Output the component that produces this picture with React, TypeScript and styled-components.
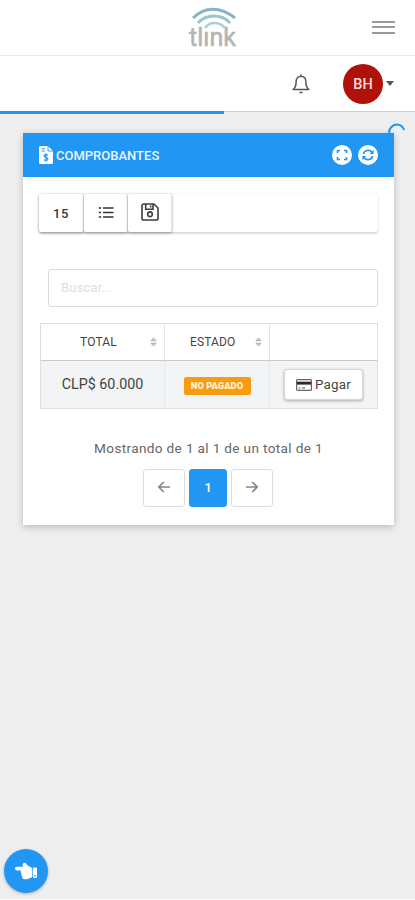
import React from 'react';
import styled, { createGlobalStyle } from 'styled-components';
import { FaHandPointLeft } from 'react-icons/fa';

const blue = '#2196f3';

const GlobalStyle = createGlobalStyle`
  *, *::before, *::after { box-sizing: border-box; }
  body { margin: 0; background: #eeeeee; font-family: Roboto, "Liberation Sans", sans-serif; color: #444; }
  button, input { font: inherit; }
  svg { display: block; flex: none; }
`;

const Page = styled.div`
  height: 900px;
  overflow: hidden;
  border-bottom: 1px solid #fafafa;
`;

const BrandBar = styled.header`
  display: flex;
  justify-content: space-between;
  height: 56px;
  padding: 0 20px 0 186px;
  background: #fff;
  border-bottom: 1px solid #ebebeb;
`;

const MenuButton = styled.button`
  display: flex;
  flex-direction: column;
  gap: 3.4px;
  width: 23px;
  padding: 0;
  margin-top: 21px;
  border: 0;
  background: none;
  align-self: flex-start;
`;

const MenuLine = styled.span`
  height: 2px;
  background: #9a9a9a;
`;

const UserBar = styled.nav`
  position: relative;
  display: flex;
  align-items: center;
  justify-content: flex-end;
  height: 56px;
  padding-right: 21px;
  background: #fff;
  border-bottom: 1px solid #d2d2d2;
`;

const Progress = styled.div`
  position: absolute;
  left: 0;
  bottom: -3px;
  width: 224px;
  height: 3px;
  background: ${blue};
`;

const Avatar = styled.div`
  display: flex;
  align-items: center;
  justify-content: center;
  width: 40px;
  height: 40px;
  margin: 1px 3px 0 32px;
  border-radius: 50%;
  background: #b0120a;
  color: #f5dedd;
  font-size: 14.5px;
  font-weight: 500;
`;

const Card = styled.main`
  position: relative;
  width: 371px;
  height: 392px;
  margin: 21px 0 0 23px;
  background: #fff;
  box-shadow: 0 2px 7px rgba(0, 0, 0, 0.22);
`;

const CardHeader = styled.div`
  display: flex;
  align-items: center;
  height: 44px;
  padding: 0 16px;
  background: ${blue};
  color: #e8f5ff;
`;

const Title = styled.h1`
  flex: 1;
  margin: 1px 0 0 3px;
  font-size: 13px;
  font-weight: 500;
`;

const RoundButton = styled.button`
  display: flex;
  align-items: center;
  justify-content: center;
  width: 20px;
  height: 20px;
  margin-left: 6px;
  padding: 0;
  border: 0;
  border-radius: 50%;
  background: #fff;
  color: ${blue};
`;

const Spinner = styled.svg`
  position: absolute;
  left: 364px;
  top: -11px;
`;

const Toolbar = styled.div`
  display: flex;
  width: 339px;
  height: 38px;
  margin: 17px 0 0 16px;
  border-radius: 3px;
  background: #fff;
  box-shadow: 0 0 2px rgba(0, 0, 0, 0.12), 0 2px 2px rgba(0, 0, 0, 0.12);
`;

const ToolButton = styled.button<{ $width: number }>`
  display: flex;
  align-items: center;
  justify-content: center;
  width: ${({ $width }) => $width}px;
  padding: 0;
  border: 0;
  border-right: 1px solid #e2e2e2;
  border-radius: 2px;
  background: #fff;
  box-shadow: 0 1px 3px rgba(0, 0, 0, 0.34);
  color: #383838;
  font-size: 13px;
  font-weight: 500;
  letter-spacing: 0.5px;
`;

const Search = styled.input`
  display: block;
  width: 330px;
  height: 38px;
  margin: 37px 0 0 25px;
  padding: 0 12px 2px;
  border: 1px solid #dcdcdc;
  border-radius: 3px;
  outline: 0;
  font-size: 13px;
  letter-spacing: 0.2px;
  &::placeholder { color: #dedede; opacity: 1; }
`;

const Table = styled.div`
  width: 338px;
  margin: 16px 0 0 17px;
  border: 1px solid #dedede;
`;

const Row = styled.div<{ $body?: boolean }>`
  display: grid;
  grid-template-columns: 124px 105px 1fr;
  height: ${({ $body }) => ($body ? 47 : 37)}px;
  background: ${({ $body }) => ($body ? '#f2f4f5' : '#fff')};
  border-bottom: ${({ $body }) => ($body ? '0' : '1px solid #c9c9c9')};
`;

const HeadCell = styled.div`
  display: flex;
  align-items: center;
  justify-content: space-between;
  padding: 0 7px 1px 39px;
  border-right: 1px solid #e4e4e4;
  font-size: 12px;
  letter-spacing: 0.15px;
  &:nth-child(2) { padding-left: 25px; }
  &:last-child { border-right: 0; }
`;

const Cell = styled.div`
  display: flex;
  align-items: center;
  justify-content: center;
  padding-bottom: 2px;
  border-right: 1px solid #e7e9ea;
  font-size: 14.3px;
  &:last-child { border-right: 0; padding-bottom: 0; }
`;

const Badge = styled.span`
  display: flex;
  align-items: center;
  justify-content: center;
  width: 67px;
  height: 18px;
  margin-top: 4px;
  border-radius: 2px;
  background: #f89c0e;
  color: #fff3df;
  font-size: 9.4px;
  font-weight: 900;
`;

const PayButton = styled.button`
  display: flex;
  align-items: center;
  justify-content: center;
  gap: 3px;
  width: 79px;
  height: 31px;
  padding: 0;
  border: 1px solid #d4d6d7;
  border-radius: 3px;
  background: #fff;
  box-shadow: 0 1px 3px rgba(0, 0, 0, 0.3);
  color: #444;
  font-size: 13.4px;
  letter-spacing: 0.2px;
`;

const Summary = styled.p`
  margin: 31px 0 0;
  font-size: 13.6px;
  line-height: 16px;
  letter-spacing: 0.34px;
  color: #666;
  text-align: center;
`;

const Pagination = styled.div`
  display: flex;
  gap: 4px;
  margin: 13px 0 0 120px;
`;

const PageButton = styled.button<{ $active?: boolean }>`
  display: flex;
  align-items: center;
  justify-content: center;
  width: ${({ $active }) => ($active ? 38 : 42)}px;
  height: 38px;
  padding: 0 0 2px;
  border: 1px solid ${({ $active }) => ($active ? blue : '#dddddd')};
  border-radius: 3px;
  background: ${({ $active }) => ($active ? blue : '#fff')};
  color: ${({ $active }) => ($active ? '#fff' : '#858585')};
  font-size: 13.5px;
  font-weight: 500;
`;

const HelpButton = styled.button`
  position: fixed;
  left: 4px;
  top: 849px;
  display: flex;
  align-items: center;
  justify-content: center;
  width: 44px;
  height: 44px;
  padding: 0;
  border: 0;
  border-radius: 50%;
  background: ${blue};
  box-shadow: 0 1px 3px rgba(0, 0, 0, 0.28);
  color: #fff;
`;

const LogoText = styled.text`
  font-family: Roboto, sans-serif;
  font-size: 25.5px;
  font-weight: 400;
  fill: #b4b4b4;
  stroke: #b4b4b4;
  stroke-width: 0.5px;
`;

const Logo = () => (
  <svg width="56" height="55" viewBox="0 0 56 55" fill="none" aria-label="tlink">
    <LogoText x="3" y="46" textLength="47" lengthAdjust="spacingAndGlyphs">tlınk</LogoText>
    <path d="M7 18Q16 9.2 27 9.2T49 18" stroke="#86b3c6" strokeWidth="3" />
    <path d="M12 23Q18 16 28 16T44 23" stroke="#9bc3d0" strokeWidth="2.8" />
    <path d="M19 28Q22 23 28.5 23T39 28" stroke="#a9cfd8" strokeWidth="2.7" />
  </svg>
);

const Bell = () => (
  <svg width="20" height="22" viewBox="0 0 20 22" fill="none" stroke="#555" strokeWidth="1.5">
    <path d="M10 3.2C6.7 3.2 5.1 5.8 5.1 9C5.1 13.2 4.3 14.7 2.2 16.5H17.8C15.7 14.7 14.9 13.2 14.9 9C14.9 5.8 13.3 3.2 10 3.2Z" strokeLinejoin="round" />
    <path d="M10 1.3V3.2" />
    <path d="M8 18.7H12L11.2 20.3H8.8Z" fill="#555" stroke="none" />
  </svg>
);

const Invoice = () => (
  <svg width="14" height="18" viewBox="0 0 14 18" fill="none">
    <path d="M1.5 0H9L14 5V16.5Q14 18 12.5 18H1.5Q0 18 0 16.5V1.5Q0 0 1.5 0Z" fill="#fff" />
    <path d="M9 0V5H14M2.5 2.7H6M2.5 5H6" stroke={blue} strokeWidth=".9" />
    <path d="M9 9.2C7.5 8.3 5.1 8.4 5.1 10C5.1 11.7 8.9 11.1 8.9 13C8.9 14.7 6.3 14.7 4.8 13.8M7 7.5V15.6" stroke={blue} strokeWidth="1.2" />
  </svg>
);

const Expand = () => (
  <svg width="12" height="12" viewBox="0 0 12 12" fill="none" stroke="currentColor" strokeWidth="1.6">
    <path d="M1.5 4V1.5H4M8 1.5H10.5V4M10.5 8V10.5H8M4 10.5H1.5V8" />
  </svg>
);

const Refresh = () => (
  <svg width="14" height="12" viewBox="0 0 14 12" fill="none" stroke="currentColor" strokeWidth="1.7">
    <path d="M2.4 5C3.2 1.2 8.2.1 10.9 3M11.6 7C10.8 10.8 5.8 11.9 3.1 9" />
    <path d="M12.6.8V5H8.5ZM1.4 11.2V7H5.5Z" fill="currentColor" stroke="none" />
  </svg>
);

const List = () => (
  <svg width="16" height="14" viewBox="0 0 16 14" stroke="#333" strokeWidth="1.6">
    <path d="M5 2H15.5M5 6.5H15.5M5 11H15.5" />
    <path d="M.8 2H3.2M.8 6.5H3.2M.8 11H3.2" />
  </svg>
);

const Save = () => (
  <svg width="18" height="20" viewBox="0 0 18 20" fill="none" stroke="#3d3d3d" strokeWidth="1.6">
    <path d="M2.8 1H13L17 5V15.2Q17 17 15.2 17H2.8Q1 17 1 15.2V2.8Q1 1 2.8 1Z" />
    <path d="M4.7 1V6.3H12V1M9.7 2.5V4.5" />
    <circle cx="9" cy="11.2" r="2.3" />
  </svg>
);

const Sort = () => (
  <svg width="7" height="10" viewBox="0 0 7 10" fill="#dedede" stroke="#aaa" strokeWidth="1">
    <path d="M1 3.7L3.5 1L6 3.7ZM1 6.3L3.5 9L6 6.3Z" />
  </svg>
);

const PaymentCard = () => (
  <svg width="16" height="12" viewBox="0 0 16 12">
    <rect x=".6" y=".6" width="14.8" height="10.8" rx="1" fill="#fff" stroke="#666" strokeWidth="1.2" />
    <path d="M1 2.7H15V5.6H1Z" fill="#292929" />
    <path d="M2.5 9H4.5M6 9H9" stroke="#555" />
  </svg>
);

const Arrow = ({ forward = false }: { forward?: boolean }) => (
  <svg width="14" height="14" viewBox="0 0 14 14" fill="none" stroke="currentColor" strokeWidth="1.7">
    <path d={forward ? 'M1 7H12M7.2 2L12.2 7L7.2 12' : 'M13 7H2M6.8 2L1.8 7L6.8 12'} />
  </svg>
);

export default function App() {
  return (
    <Page>
      <GlobalStyle />
      <BrandBar>
        <Logo />
        <MenuButton aria-label="Menú"><MenuLine /><MenuLine /><MenuLine /></MenuButton>
      </BrandBar>
      <UserBar>
        <Bell />
        <Avatar>BH</Avatar>
        <svg width="8" height="5" viewBox="0 0 8 5"><path d="M0 0H8L4 5Z" fill="#555" /></svg>
        <Progress />
      </UserBar>
      <Card>
        <CardHeader>
          <Invoice />
          <Title>COMPROBANTES</Title>
          <RoundButton aria-label="Expandir"><Expand /></RoundButton>
          <RoundButton aria-label="Actualizar"><Refresh /></RoundButton>
        </CardHeader>
        <Spinner width="20" height="14" viewBox="0 0 20 14" fill="none">
          <path d="M2.5 12C1 7.5 5 2.5 10 2.5Q15 2.5 17.2 8" stroke={blue} strokeWidth="2" />
        </Spinner>
        <Toolbar>
          <ToolButton $width={45}>15</ToolButton>
          <ToolButton $width={44}><List /></ToolButton>
          <ToolButton $width={44}><Save /></ToolButton>
        </Toolbar>
        <Search placeholder="Buscar..." />
        <Table>
          <Row>
            <HeadCell>TOTAL<Sort /></HeadCell>
            <HeadCell>ESTADO<Sort /></HeadCell>
            <HeadCell />
          </Row>
          <Row $body>
            <Cell>CLP$ 60.000</Cell>
            <Cell><Badge>NO PAGADO</Badge></Cell>
            <Cell><PayButton><PaymentCard />Pagar</PayButton></Cell>
          </Row>
        </Table>
        <Summary>Mostrando de 1 al 1 de un total de 1</Summary>
        <Pagination>
          <PageButton aria-label="Anterior"><Arrow /></PageButton>
          <PageButton $active>1</PageButton>
          <PageButton aria-label="Siguiente"><Arrow forward /></PageButton>
        </Pagination>
      </Card>
      <HelpButton aria-label="Ayuda"><FaHandPointLeft size={22} /></HelpButton>
    </Page>
  );
}
